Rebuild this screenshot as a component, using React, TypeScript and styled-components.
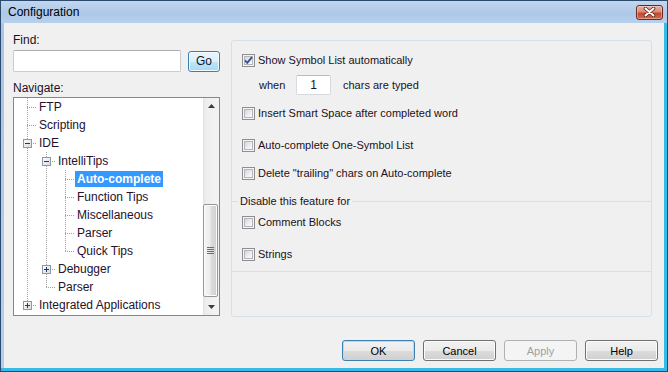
import React from 'react';
import styled, { createGlobalStyle, css } from 'styled-components';

const GlobalStyle = createGlobalStyle`
  html, body {
    margin: 0;
    padding: 0;
    background: #f0f0f0;
  }
  body {
    width: 668px;
    height: 372px;
    overflow: hidden;
    font-family: 'Liberation Sans', Arial, sans-serif;
  }
  * {
    box-sizing: border-box;
  }
`;

type TreeNode = {
  label: string;
  level: number;
  rails: boolean[];
  last?: boolean;
  toggle?: 'open' | 'closed';
  selected?: boolean;
};

const nodes: TreeNode[] = [
  { label: 'FTP', level: 0, rails: [] },
  { label: 'Scripting', level: 0, rails: [] },
  { label: 'IDE', level: 0, rails: [], toggle: 'open' },
  { label: 'IntelliTips', level: 1, rails: [true], toggle: 'open' },
  { label: 'Auto-complete', level: 2, rails: [true, true], selected: true },
  { label: 'Function Tips', level: 2, rails: [true, true] },
  { label: 'Miscellaneous', level: 2, rails: [true, true] },
  { label: 'Parser', level: 2, rails: [true, true] },
  { label: 'Quick Tips', level: 2, rails: [true, true], last: true },
  { label: 'Debugger', level: 1, rails: [true], toggle: 'closed' },
  { label: 'Parser', level: 1, rails: [true], last: true },
  {
    label: 'Integrated Applications',
    level: 0,
    rails: [],
    last: true,
    toggle: 'closed',
  },
];

const INDENT = 19;
const ROOT_X = 13;
const DOTS = '#a0a0a0';

const Guides = ({ node, id }: { node: TreeNode; id: string }) => {
  const width = 23 + INDENT * node.level;
  const cx = ROOT_X + INDENT * node.level;
  return (
    <svg width={width} height={18} style={{ flex: 'none' }}>
      <defs>
        <linearGradient id={id} x1="0" y1="0" x2="1" y2="1">
          <stop offset="0" stopColor="#ffffff" />
          <stop offset="1" stopColor="#d4d8de" />
        </linearGradient>
      </defs>
      {node.rails.map((on, i) =>
        on ? (
          <line
            key={i}
            x1={ROOT_X + INDENT * i + 0.5}
            y1={0}
            x2={ROOT_X + INDENT * i + 0.5}
            y2={18}
            stroke={DOTS}
            strokeDasharray="1 1"
          />
        ) : null,
      )}
      <line
        x1={cx + 0.5}
        y1={0}
        x2={cx + 0.5}
        y2={node.last ? 10 : 18}
        stroke={DOTS}
        strokeDasharray="1 1"
      />
      <line
        x1={cx}
        y1={9.5}
        x2={cx + 10}
        y2={9.5}
        stroke={DOTS}
        strokeDasharray="1 1"
      />
      {node.toggle && (
        <g>
          <rect
            x={cx - 3.5}
            y={5.5}
            width={8}
            height={8}
            fill={`url(#${id})`}
            stroke="#8e99a8"
          />
          <line x1={cx - 2} y1={9.5} x2={cx + 3} y2={9.5} stroke="#1f3a72" />
          {node.toggle === 'closed' && (
            <line x1={cx + 0.5} y1={7} x2={cx + 0.5} y2={12} stroke="#1f3a72" />
          )}
        </g>
      )}
    </svg>
  );
};

const CheckBox = ({ checked }: { checked?: boolean }) => (
  <Box>
    <BoxInner />
    {checked && (
      <CheckMark width="13" height="13" viewBox="0 0 13 13">
        <path
          d="M3 6.3 L5.3 8.8 L10 3.2"
          fill="none"
          stroke="#34509a"
          strokeWidth="1.9"
        />
      </CheckMark>
    )}
  </Box>
);

export default function App() {
  return (
    <>
      <GlobalStyle />
      <Window>
        <TitleBar>
          <Title>Configuration</Title>
          <CloseButton>
            <svg width="13" height="10" viewBox="0 0 13 10">
              <path
                d="M2.5 1.5 L10.5 8.5 M10.5 1.5 L2.5 8.5"
                stroke="#5b231b"
                strokeWidth="3.6"
                strokeLinecap="round"
              />
              <path
                d="M2.5 1.5 L10.5 8.5 M10.5 1.5 L2.5 8.5"
                stroke="#ffffff"
                strokeWidth="2"
                strokeLinecap="round"
              />
            </svg>
          </CloseButton>
        </TitleBar>
        <Client>
          <Body>
            <LeftColumn>
              <FieldLabel>Find:</FieldLabel>
              <FindRow>
                <TextInput />
                <GoButton>Go</GoButton>
              </FindRow>
              <FieldLabel $top={9}>Navigate:</FieldLabel>
              <Tree>
                <TreeList>
                  {nodes.map((node, i) => (
                    <TreeRow key={i}>
                      <Guides node={node} id={`exp-${i}`} />
                      <NodeLabel $selected={node.selected}>{node.label}</NodeLabel>
                    </TreeRow>
                  ))}
                </TreeList>
                <ScrollBar>
                  <ScrollButton>
                    <svg width="7" height="4" viewBox="0 0 7 4">
                      <path d="M0 4 L3.5 0 L7 4 Z" fill="#3c3c3c" />
                    </svg>
                  </ScrollButton>
                  <ScrollTrack>
                    <Thumb>
                      <svg width="7" height="7" viewBox="0 0 7 7">
                        {[0.5, 2.5, 4.5, 6.5].map(y => (
                          <line key={y} x1="0" y1={y} x2="7" y2={y} stroke="#6e6e6e" />
                        ))}
                      </svg>
                    </Thumb>
                  </ScrollTrack>
                  <ScrollButton>
                    <svg width="7" height="4" viewBox="0 0 7 4">
                      <path d="M0 0 L7 0 L3.5 4 Z" fill="#3c3c3c" />
                    </svg>
                  </ScrollButton>
                </ScrollBar>
              </Tree>
            </LeftColumn>
            <Panel>
              <Upper>
                <OptionRow>
                  <CheckBox checked />
                  <span>Show Symbol List automatically</span>
                </OptionRow>
                <WhenRow>
                  <WhenLabel>when</WhenLabel>
                  <SmallInput>1</SmallInput>
                  <span>chars are typed</span>
                </WhenRow>
                <OptionRow $top={10}>
                  <CheckBox />
                  <span>Insert Smart Space after completed word</span>
                </OptionRow>
                <OptionRow $top={16}>
                  <CheckBox />
                  <span>Auto-complete One-Symbol List</span>
                </OptionRow>
                <OptionRow $top={12}>
                  <CheckBox />
                  <span>Delete "trailing" chars on Auto-complete</span>
                </OptionRow>
              </Upper>
              <Group>
                <GroupLegend>Disable this feature for</GroupLegend>
                <OptionRow>
                  <CheckBox />
                  <span>Comment Blocks</span>
                </OptionRow>
                <OptionRow $top={16}>
                  <CheckBox />
                  <span>Strings</span>
                </OptionRow>
              </Group>
            </Panel>
          </Body>
          <ButtonBar>
            <DialogButton $default>OK</DialogButton>
            <DialogButton>Cancel</DialogButton>
            <DialogButton disabled>Apply</DialogButton>
            <DialogButton>Help</DialogButton>
          </ButtonBar>
        </Client>
      </Window>
    </>
  );
}

const Window = styled.div`
  width: 668px;
  height: 372px;
  display: flex;
  flex-direction: column;
  border: 1px solid #2d4a6e;
  background: linear-gradient(to bottom, #b9d1ea 0, #a9c6e7 30px, #b4cfec 100%);
  box-shadow: inset -3px -3px 0 #36bbe8;
`;

const TitleBar = styled.div`
  height: 22px;
  flex: none;
  display: flex;
  align-items: center;
  justify-content: space-between;
  padding: 0 4px 0 7px;
  background: linear-gradient(to bottom, #c2d7ee 0%, #adc8e8 55%, #b7d0ec 100%);
`;

const Title = styled.span`
  font-size: 12px;
  color: #000;
`;

const CloseButton = styled.div`
  width: 27px;
  height: 15px;
  display: flex;
  align-items: center;
  justify-content: center;
  border: 1px solid #6a2a20;
  border-radius: 3px;
  background: linear-gradient(
    to bottom,
    #eab3a4 0%,
    #d98a74 45%,
    #c3482f 55%,
    #d26a4f 100%
  );
  box-shadow: inset 0 0 0 1px rgba(255, 220, 210, 0.45);
`;

const Client = styled.div`
  flex: 1;
  margin: 0 3px 3px 3px;
  padding: 10px 6px 0 9px;
  background: #f0f0f0;
  display: flex;
  flex-direction: column;
  color: #1c1020;
`;

const Body = styled.div`
  display: flex;
  gap: 11px;
  margin-right: 6px;
  align-items: flex-start;
`;

const LeftColumn = styled.div`
  width: 207px;
  flex: none;
  display: flex;
  flex-direction: column;
`;

const FieldLabel = styled.div<{ $top?: number }>`
  font-size: 12px;
  line-height: 14px;
  height: 14px;
  margin-top: ${p => p.$top ?? 0}px;
  margin-bottom: ${p => (p.$top ? 2 : 3)}px;
`;

const FindRow = styled.div`
  display: flex;
  align-items: center;
  justify-content: space-between;
  height: 22px;
`;

const TextInput = styled.div`
  width: 168px;
  height: 22px;
  background: #fff;
  border: 1px solid #c9ccd2;
  border-top-color: #abadb3;
  border-radius: 2px;
`;

const GoButton = styled.div`
  width: 32px;
  height: 21px;
  display: flex;
  align-items: center;
  justify-content: center;
  font-size: 12px;
  border: 1px solid #3c7fb1;
  border-radius: 3px;
  background: linear-gradient(
    to bottom,
    #eaf6fd 0%,
    #d9f0fc 50%,
    #bee6fd 50%,
    #a7d9f5 100%
  );
  box-shadow: inset 0 0 0 1px #f4fbff;
`;

const Tree = styled.div`
  height: 219px;
  display: flex;
  background: #fff;
  border: 1px solid #828790;
`;

const TreeList = styled.div`
  flex: 1;
  overflow: hidden;
  display: flex;
  flex-direction: column;
`;

const TreeRow = styled.div`
  height: 18px;
  flex: none;
  display: flex;
  align-items: center;
`;

const NodeLabel = styled.span<{ $selected?: boolean }>`
  height: 16px;
  line-height: 16px;
  padding: 0 2px;
  font-size: 12px;
  white-space: nowrap;
  color: #24112b;
  ${p =>
    p.$selected &&
    css`
      background: #3399ff;
      color: #fff;
      font-weight: bold;
    `}
`;

const ScrollBar = styled.div`
  width: 16px;
  flex: none;
  display: flex;
  flex-direction: column;
  background: linear-gradient(to right, #e3e3e3 0, #eeeeee 3px, #f4f4f4 100%);
`;

const ScrollButton = styled.div`
  height: 16px;
  flex: none;
  display: flex;
  align-items: center;
  justify-content: center;
`;

const ScrollTrack = styled.div`
  flex: 1;
  padding-top: 90px;
`;

const Thumb = styled.div`
  height: 93px;
  margin: 0 1px 0 0;
  display: flex;
  align-items: center;
  justify-content: center;
  border: 1px solid #979797;
  border-radius: 2px;
  background: linear-gradient(
    to right,
    #f6f6f6 0%,
    #ececec 45%,
    #dcdcdc 55%,
    #cfcfcf 100%
  );
  box-shadow: inset 0 0 0 1px #fbfbfb;
`;

const Panel = styled.div`
  flex: 1;
  height: 277px;
  margin-top: 7px;
  border: 1px solid #d5dfe5;
  border-radius: 3px;
  font-size: 11px;
`;

const Upper = styled.div`
  padding-top: 11px;
`;

const OptionRow = styled.div<{ $top?: number }>`
  height: 16px;
  margin-top: ${p => p.$top ?? 0}px;
  padding-left: 10px;
  display: flex;
  align-items: center;
  gap: 3px;
  white-space: nowrap;
`;

const WhenRow = styled.div`
  height: 20px;
  margin-top: 7px;
  padding-left: 27px;
  display: flex;
  align-items: center;
  white-space: nowrap;
`;

const WhenLabel = styled.span`
  width: 37px;
`;

const SmallInput = styled.div`
  width: 35px;
  height: 20px;
  margin-right: 12px;
  display: flex;
  align-items: center;
  justify-content: center;
  font-size: 12px;
  background: #fff;
  border: 1px solid #d6d9de;
  border-top-color: #b9bcc2;
  border-radius: 2px;
`;

const Group = styled.fieldset`
  margin: 13px 0 0;
  padding: 6px 0 9px;
  min-inline-size: 0;
  border: 0;
  border-top: 1px solid #d5dfe5;
  border-bottom: 1px solid #d5dfe5;
`;

const GroupLegend = styled.legend`
  margin-left: 6px;
  padding: 0 2px;
  font-size: 11px;
  line-height: 14px;
`;

const Box = styled.span`
  position: relative;
  width: 13px;
  height: 13px;
  flex: none;
  display: flex;
  align-items: center;
  justify-content: center;
  border: 1px solid #8f8f8f;
  background: #f4f4f4;
`;

const BoxInner = styled.span`
  width: 9px;
  height: 9px;
  border: 1px solid #b3b7bd;
  background: linear-gradient(135deg, #d2d5da 0%, #eef0f2 60%, #fbfbfb 100%);
`;

const CheckMark = styled.svg`
  position: absolute;
  left: -1px;
  top: -1px;
`;

const ButtonBar = styled.div`
  margin-top: 23px;
  display: flex;
  justify-content: flex-end;
  gap: 8px;
`;

const DialogButton = styled.button<{ $default?: boolean }>`
  width: 73px;
  height: 21px;
  padding: 0;
  font-family: 'Liberation Sans', Arial, sans-serif;
  font-size: 11px;
  color: #000;
  border: 1px solid #707070;
  border-radius: 3px;
  background: linear-gradient(
    to bottom,
    #f2f2f2 0%,
    #ebebeb 50%,
    #dddddd 50%,
    #cfcfcf 100%
  );
  box-shadow: inset 0 0 0 1px #fbfbfb;
  ${p =>
    p.$default &&
    css`
      border-color: #3c7fb1;
      box-shadow: inset 0 0 0 1px #a9e0f8;
    `}
  &:disabled {
    color: #a0a0a0;
    border-color: #adb2b5;
    background: #f4f4f4;
    box-shadow: none;
  }
`;
